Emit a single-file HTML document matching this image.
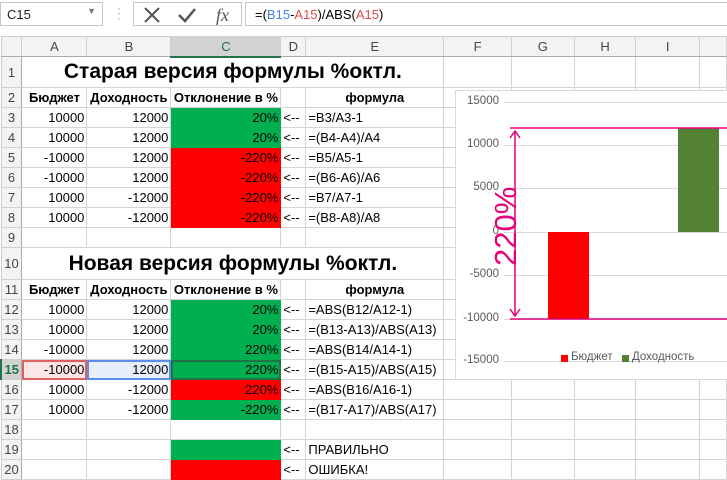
<!DOCTYPE html>
<html><head><meta charset="utf-8"><style>
*{margin:0;padding:0;box-sizing:border-box}
body{width:727px;height:480px;overflow:hidden;background:#fff;font-family:"Liberation Sans",Arial,sans-serif;font-size:13px;color:#000;position:relative}
.tb{position:absolute;left:0;top:0;width:727px;height:36px;background:#fff}
.nb{position:absolute;left:0;top:2px;width:103px;height:24px;border:1px solid #c6c6c6;padding:4px 6px;font-size:13px;color:#222}
.fb{position:absolute;left:245px;top:2px;width:482px;height:24px;border:1px solid #c6c6c6;border-right:none;padding:4px 9px;font-size:13px}
.ib{position:absolute;left:133px;top:2px;width:109px;height:24px;border:1px solid #c6c6c6}
table{position:absolute;left:0;top:36px;border-collapse:collapse;table-layout:fixed}
td{border:1px solid #d4d4d4;padding:0 2px;white-space:nowrap;overflow:visible;height:20px;font-size:13px}
tr.h td{background:#f3f3f3;color:#444;text-align:center;border-color:#cfcfcf;border-bottom-color:#ababab}
td.rh{background:#f3f3f3;color:#444;text-align:center;padding:0;border-color:#cfcfcf;border-right-color:#ababab}
.r{text-align:right}.c{text-align:center}.b{font-weight:bold}
.g{background:#00b050;border-color:#00b050}.rd{background:#ff0000;border-color:#ff0000}
.t{font-size:21px;font-weight:bold;text-align:center}
.chart{position:absolute;left:455px;top:90px;width:280px;height:290px;background:#fff;border:1px solid #d9d9d9}
.chart .lb{position:absolute;left:0;width:43px;text-align:right;font-size:11.5px;color:#595959}
.gl{position:absolute;left:48px;right:0;height:1px;background:#d9d9d9}
</style></head><body>
<div class="tb">
<div class="nb">C15<span style="position:absolute;right:6px;top:3px;font-size:9px;color:#777">▼</span></div>
<div style="position:absolute;left:117px;top:6px;color:#999;font-size:12px;line-height:5px">·<br>·<br>·</div>
<div class="ib">
<svg width="109" height="24" style="position:absolute;left:0;top:0"><path d="M11 5 L25 19 M25 5 L11 19" stroke="#555" stroke-width="2"/><path d="M45 12 L51 18 L61 6" stroke="#555" stroke-width="2.5" fill="none"/><text x="82" y="18" font-family="Liberation Serif" font-style="italic" font-size="18" fill="#555">fx</text></svg>
</div>
<div class="fb">=(<span style="color:#4a7fe0">B15</span>-<span style="color:#e04848">A15</span>)/ABS(<span style="color:#e04848">A15</span>)</div>
</div>
<table>
<colgroup><col style="width:21px"><col style="width:65px"><col style="width:84px"><col style="width:110px"><col style="width:25px"><col style="width:138px"><col style="width:68px"><col style="width:63px"><col style="width:62px"><col style="width:64px"><col style="width:27px"></colgroup>
<tr class="h"><td></td><td>A</td><td>B</td><td style="background:#d2d2d2;color:#217346;border-bottom:2px solid #217346">C</td><td>D</td><td>E</td><td>F</td><td>G</td><td>H</td><td>I</td><td></td></tr>
<tr style="height:31px"><td class="rh">1</td><td colspan="5" class="t">Старая версия формулы %октл.</td><td></td><td></td><td></td><td></td><td></td></tr>
<tr><td class="rh">2</td><td class="b c">Бюджет</td><td class="b c">Доходность</td><td class="b c">Отклонение в %</td><td></td><td class="b c">формула</td><td></td><td></td><td></td><td></td><td></td></tr>
<tr><td class="rh">3</td><td class="r">10000</td><td class="r">12000</td><td class="r g">20%</td><td>&lt;--</td><td>=B3/A3-1</td><td></td><td></td><td></td><td></td><td></td></tr>
<tr><td class="rh">4</td><td class="r">10000</td><td class="r">12000</td><td class="r g">20%</td><td>&lt;--</td><td>=(B4-A4)/A4</td><td></td><td></td><td></td><td></td><td></td></tr>
<tr><td class="rh">5</td><td class="r">-10000</td><td class="r">12000</td><td class="r rd">-220%</td><td>&lt;--</td><td>=B5/A5-1</td><td></td><td></td><td></td><td></td><td></td></tr>
<tr><td class="rh">6</td><td class="r">-10000</td><td class="r">12000</td><td class="r rd">-220%</td><td>&lt;--</td><td>=(B6-A6)/A6</td><td></td><td></td><td></td><td></td><td></td></tr>
<tr><td class="rh">7</td><td class="r">10000</td><td class="r">-12000</td><td class="r rd">-220%</td><td>&lt;--</td><td>=B7/A7-1</td><td></td><td></td><td></td><td></td><td></td></tr>
<tr><td class="rh">8</td><td class="r">10000</td><td class="r">-12000</td><td class="r rd">-220%</td><td>&lt;--</td><td>=(B8-A8)/A8</td><td></td><td></td><td></td><td></td><td></td></tr>
<tr><td class="rh">9</td><td></td><td></td><td></td><td></td><td></td><td></td><td></td><td></td><td></td><td></td></tr>
<tr style="height:32px"><td class="rh">10</td><td colspan="5" class="t">Новая версия формулы %октл.</td><td></td><td></td><td></td><td></td><td></td></tr>
<tr><td class="rh">11</td><td class="b c">Бюджет</td><td class="b c">Доходность</td><td class="b c">Отклонение в %</td><td></td><td class="b c">формула</td><td></td><td></td><td></td><td></td><td></td></tr>
<tr><td class="rh">12</td><td class="r">10000</td><td class="r">12000</td><td class="r g">20%</td><td>&lt;--</td><td>=ABS(B12/A12-1)</td><td></td><td></td><td></td><td></td><td></td></tr>
<tr><td class="rh">13</td><td class="r">10000</td><td class="r">12000</td><td class="r g">20%</td><td>&lt;--</td><td>=(B13-A13)/ABS(A13)</td><td></td><td></td><td></td><td></td><td></td></tr>
<tr><td class="rh">14</td><td class="r">-10000</td><td class="r">12000</td><td class="r g">220%</td><td>&lt;--</td><td>=ABS(B14/A14-1)</td><td></td><td></td><td></td><td></td><td></td></tr>
<tr><td class="rh b" style="background:#d2d2d2;color:#217346;border-left:2px solid #217346">15</td><td class="r" style="background:#fbe5e5;outline:2px solid #e06060;outline-offset:-2px">-10000</td><td class="r" style="background:#e8eefb;outline:2px solid #5b8ee6;outline-offset:-2px">12000</td><td class="r g" style="outline:2px solid #217346;outline-offset:-2px">220%</td><td>&lt;--</td><td>=(B15-A15)/ABS(A15)</td><td></td><td></td><td></td><td></td><td></td></tr>
<tr><td class="rh">16</td><td class="r">10000</td><td class="r">-12000</td><td class="r rd">220%</td><td>&lt;--</td><td>=ABS(B16/A16-1)</td><td></td><td></td><td></td><td></td><td></td></tr>
<tr><td class="rh">17</td><td class="r">10000</td><td class="r">-12000</td><td class="r g">-220%</td><td>&lt;--</td><td>=(B17-A17)/ABS(A17)</td><td></td><td></td><td></td><td></td><td></td></tr>
<tr><td class="rh">18</td><td></td><td></td><td></td><td></td><td></td><td></td><td></td><td></td><td></td><td></td></tr>
<tr><td class="rh">19</td><td></td><td></td><td class="g"></td><td>&lt;--</td><td>ПРАВИЛЬНО</td><td></td><td></td><td></td><td></td><td></td></tr>
<tr><td class="rh">20</td><td></td><td></td><td class="rd"></td><td>&lt;--</td><td>ОШИБКА!</td><td></td><td></td><td></td><td></td><td></td></tr>
</table>
<div class="chart">
<div class="gl" style="top:11px"></div><div class="gl" style="top:54px"></div><div class="gl" style="top:97px"></div><div class="gl" style="top:141px"></div><div class="gl" style="top:184px"></div><div class="gl" style="top:228px"></div><div class="gl" style="top:270px"></div>
<div class="lb" style="top:4px">15000</div><div class="lb" style="top:47px">10000</div><div class="lb" style="top:90px">5000</div><div class="lb" style="top:134px">0</div><div class="lb" style="top:177px">-5000</div><div class="lb" style="top:221px">-10000</div><div class="lb" style="top:263px">-15000</div>
<div style="position:absolute;left:92px;top:141px;width:41px;height:87px;background:#ff0000"></div>
<div style="position:absolute;left:222px;top:37px;width:41px;height:104px;background:#548235"></div>
<svg width="280" height="290" style="position:absolute;left:0;top:0">
<path d="M54 37 H280 M54 228 H280" stroke="#e6007e" stroke-width="1.5"/>
<path d="M59 40 V225 M54 47 L59 40 L64 47 M54 218 L59 225 L64 218" stroke="#e6007e" stroke-width="1.5" fill="none"/>
<text transform="translate(60,175) rotate(-90)" font-family="Liberation Sans" font-size="31" fill="#e6007e">220%</text>
</svg>
<div style="position:absolute;left:105px;top:264px;width:7px;height:7px;background:#ff0000"></div>
<div style="position:absolute;left:115px;top:260px;font-size:11.5px;color:#595959">Бюджет</div>
<div style="position:absolute;left:166px;top:264px;width:7px;height:7px;background:#548235"></div>
<div style="position:absolute;left:176px;top:260px;font-size:11.5px;color:#595959">Доходность</div>
</div>
</body></html>
